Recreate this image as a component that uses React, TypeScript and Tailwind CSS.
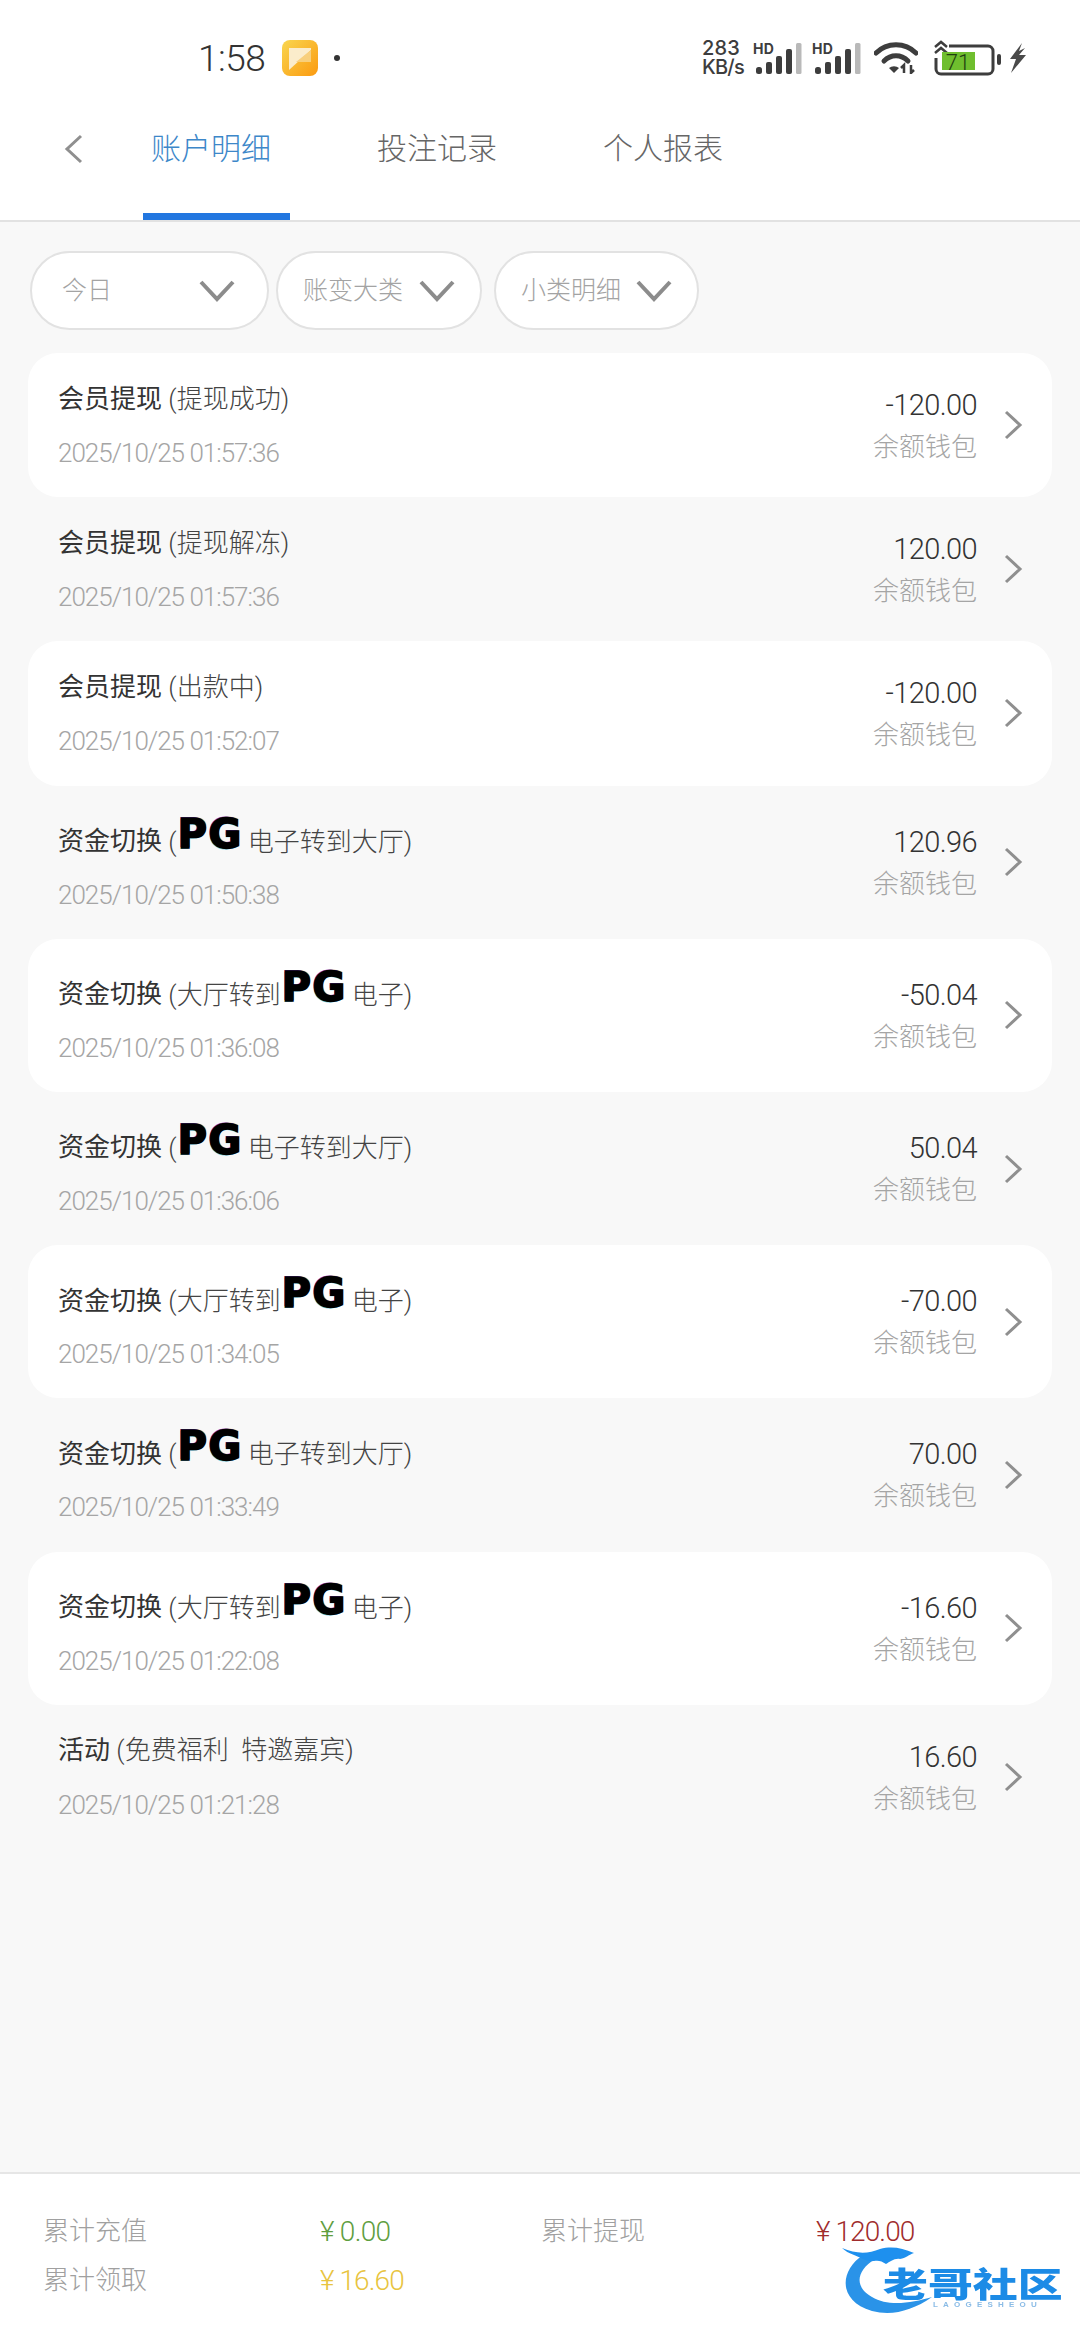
import React from "react";

const cjk = "font-['Roboto','Noto_Sans_CJK_SC',sans-serif]";

function Signal() {
  return (
    <div className="relative h-[31px] w-[49px]">
      <span className="absolute left-0 top-0 font-['Inter',sans-serif] text-[14px] font-bold leading-[11px] tracking-[0.4px] text-[#3d3d3d]">HD</span>
      <svg width="49" height="31" viewBox="0 0 49 31" className="absolute left-0 top-0">
        <rect x="3" y="24" width="6" height="7" rx="2.5" fill="#3d3d3d" />
        <rect x="13" y="19" width="6" height="12" rx="2" fill="#3d3d3d" />
        <rect x="23" y="13" width="6" height="18" rx="2" fill="#3d3d3d" />
        <rect x="33" y="6" width="6" height="25" rx="2" fill="#3d3d3d" />
        <rect x="43" y="0" width="5.5" height="31" rx="1.5" fill="#b9b9b9" />
      </svg>
    </div>
  );
}

function StatusBar() {
  return (
    <div className="flex h-[90px] items-center pr-[54px] pt-[26px]">
      <span className="ml-[198px] font-['Roboto',sans-serif] text-[37px] font-light leading-none tracking-[-0.5px] text-[#333]">1:58</span>
      <svg width="36" height="36" viewBox="0 0 36 36" className="ml-[17px]">
        <defs>
          <linearGradient id="o" x1="0" y1="0" x2="1" y2="1">
            <stop offset="0" stopColor="#f9d64f" />
            <stop offset="1" stopColor="#fb9a10" />
          </linearGradient>
        </defs>
        <rect width="36" height="36" rx="8" fill="url(#o)" />
        <path d="M7 8h22v2L7 30z" fill="#fbeccb" />
        <path d="M29 10v12H14z" fill="#f8cf7c" />
      </svg>
      <span className="ml-[16px] h-[6px] w-[6px] rounded-full bg-[#333]" />
      <div className="ml-auto flex w-[46px] flex-col font-['Inter',sans-serif] text-[20px] font-medium leading-[19px] text-[#3d3d3d]">
        <span className="tracking-[0.2px]">283</span>
        <span className="whitespace-nowrap tracking-[-0.8px]">KB/s</span>
      </div>
      <div className="ml-[5px]"><Signal /></div>
      <div className="ml-[10px]"><Signal /></div>
      <svg width="44" height="32" viewBox="0 0 44 32" className="ml-[13px]">
        <path d="M2 11C13 0 31 0 42 11" fill="none" stroke="#3d3d3d" strokeWidth="5" strokeLinecap="round" />
        <path d="M10 19C17 12 27 12 34 19" fill="none" stroke="#3d3d3d" strokeWidth="5" strokeLinecap="round" />
        <path d="M15 26a7 6 0 0 1 10 0l-5 5z" fill="#3d3d3d" />
        <path d="M30 31v-8l-3 3M37 23v8l3-3" fill="none" stroke="#3d3d3d" strokeWidth="2.5" />
      </svg>
      <svg width="68" height="36" viewBox="0 0 68 36" className="ml-[16px]">
        <path d="M1 7l6-5 6 5M1 13l6-5 6 5" fill="none" stroke="#3d3d3d" strokeWidth="2.5" />
        <path d="M2 18v11a5 5 0 0 0 5 5h47a5 5 0 0 0 5-5V11a5 5 0 0 0-5-5H15" fill="none" stroke="#3d3d3d" strokeWidth="3" />
        <path d="M8 12h33v18H8z" fill="#6fbe2e" />
        <rect x="63" y="14" width="4" height="11" rx="2" fill="#3d3d3d" />
        <text x="24" y="30" textAnchor="middle" fontFamily="Roboto" fontSize="22" fontWeight="300" fill="#1f3d10">71</text>
      </svg>
      <svg width="17" height="30" viewBox="0 0 17 30" className="ml-[7px]">
        <path d="M13 0L1 16h6l-5 14 15-18h-7l6-7-6 3z" fill="#4a4a4a" />
      </svg>
    </div>
  );
}

function Tabs() {
  return (
    <div className="flex h-[130px] items-stretch">
      <div className="ml-[64px] flex items-center pb-[13px]">
        <svg width="20" height="30" viewBox="0 0 20 30">
          <path d="M17 2L3 15l14 13" fill="none" stroke="#8f8f8f" strokeWidth="3" />
        </svg>
      </div>
      <div className={`ml-[59px] flex w-[147px] items-center border-b-[7px] border-[#2277e0] pb-[7px] pl-[8px] text-[30px] font-light text-[#3d87c9] ${cjk}`}>账户明细</div>
      <div className={`ml-[87px] flex w-[120px] items-center pb-[14px] text-[30px] font-light text-[#666] ${cjk}`}>投注记录</div>
      <div className={`ml-[106px] flex w-[120px] items-center pb-[14px] text-[30px] font-light text-[#666] ${cjk}`}>个人报表</div>
    </div>
  );
}

function Filter({ label, w, pl, iconMl }: { label: string; w: string; pl: string; iconMl: string }) {
  return (
    <div className={`flex h-[79px] items-center rounded-full border-[2.5px] border-[#e2e2e2] bg-white ${w} ${pl} text-[25px] font-light text-[#a3a3a3] ${cjk}`}>
      <span>{label}</span>
      <svg width="36" height="24" viewBox="0 0 36 24" className={iconMl}>
        <path d="M2 3l16 17L34 3" fill="none" stroke="#8c8c8c" strokeWidth="4" />
      </svg>
    </div>
  );
}

function PG() {
  return (
    <span className="ml-[1px] mr-[5px] inline-block -translate-y-[3px] font-['DejaVu_Sans',sans-serif] text-[40px] font-bold leading-[30px] tracking-[1.5px] text-black [-webkit-text-stroke:1.5px_#000] [text-shadow:-1px_-1px_0_#7a3ccf,1px_-1px_0_#f4c46a,-1px_1px_0_#58c8e8]">PG</span>
  );
}

type Row = { title: string; detail: React.ReactNode; time: string; amount: string };

const rows: Row[] = [
  { title: "会员提现", detail: "(提现成功)", time: "2025/10/25 01:57:36", amount: "-120.00" },
  { title: "会员提现", detail: "(提现解冻)", time: "2025/10/25 01:57:36", amount: "120.00" },
  { title: "会员提现", detail: "(出款中)", time: "2025/10/25 01:52:07", amount: "-120.00" },
  { title: "资金切换", detail: <>(<PG />电子转到大厅)</>, time: "2025/10/25 01:50:38", amount: "120.96" },
  { title: "资金切换", detail: <>(大厅转到<PG />电子)</>, time: "2025/10/25 01:36:08", amount: "-50.04" },
  { title: "资金切换", detail: <>(<PG />电子转到大厅)</>, time: "2025/10/25 01:36:06", amount: "50.04" },
  { title: "资金切换", detail: <>(大厅转到<PG />电子)</>, time: "2025/10/25 01:34:05", amount: "-70.00" },
  { title: "资金切换", detail: <>(<PG />电子转到大厅)</>, time: "2025/10/25 01:33:49", amount: "70.00" },
  { title: "资金切换", detail: <>(大厅转到<PG />电子)</>, time: "2025/10/25 01:22:08", amount: "-16.60" },
  { title: "活动", detail: "(免费福利  特邀嘉宾)", time: "2025/10/25 01:21:28", amount: "16.60" },
];

function RowItem({ row, index }: { row: Row; index: number }) {
  const tall = index >= 3 && index <= 8;
  return (
    <div className={`flex items-center rounded-[30px] pl-[30px] pr-[29px] ${tall ? "h-[153.2px]" : "h-[144.2px]"} ${index % 2 === 0 ? "bg-white" : ""}`}>
      <div className={`flex-1 self-start ${tall ? "pt-[38px]" : "pt-[28px]"} ${cjk}`}>
        <div className="flex h-[36px] items-center whitespace-pre text-[26px] text-[#333]">
          <span className="font-normal">{row.title}</span>
          <span className="font-light"> </span>
          <span className="font-light text-[#444]">{row.detail}</span>
        </div>
        <div className={`h-[36px] text-[26px] font-light leading-[36px] tracking-[-1px] text-[#a5a5a5] ${tall ? "mt-[17px]" : "mt-[18px]"}`}>{row.time}</div>
      </div>
      <div className={`self-start text-right ${tall ? "pt-[38px]" : "pt-[34px]"} ${cjk}`}>
        <div className="h-[36px] text-[29px] font-light leading-[36px] tracking-[-0.6px] text-[#333]">{row.amount}</div>
        <div className="mt-[6px] h-[36px] text-[26px] font-light leading-[36px] text-[#a5a5a5]">余额钱包</div>
      </div>
      <svg width="20" height="30" viewBox="0 0 20 30" className="ml-[26px]">
        <path d="M3 2l14 13L3 28" fill="none" stroke="#8f8f8f" strokeWidth="3" />
      </svg>
    </div>
  );
}

function Footer() {
  return (
    <div className={`relative h-[168px] border-t-2 border-[#e6e6e6] bg-white pl-[43px] pt-[33px] text-[26px] font-light ${cjk}`}>
      <div className="grid grid-cols-[277px_221px_275px_1fr] grid-rows-[49px_49px] items-center">
        <span className="text-[#a0a0a0]">累计充值</span>
        <span className="text-[28px] tracking-[-0.7px] text-[#5f9e3f]">¥ 0.00</span>
        <span className="text-[#a0a0a0]">累计提现</span>
        <span className="text-[28px] tracking-[-0.9px] text-[#a02c2c]">¥ 120.00</span>
        <span className="text-[#a0a0a0]">累计领取</span>
        <span className="text-[28px] tracking-[-0.9px] text-[#e8c440]">¥ 16.60</span>
      </div>
      <div className="absolute left-[842px] top-[73px] h-[68px] w-[222px] blur-[0.5px]">
        <svg width="100" height="68" viewBox="0 0 100 68" className="absolute left-0 top-0">
          <path d="M21 8C-3 24-4 54 30 64c20 5 40 0 60-14-20 6-44 10-60 0C12 40 14 24 33 12z" fill="#2a93e8" />
          <path d="M0 1c14 6 26 6 38 1 12-3 22-1 34 4-6 2-8 5-14 6-6-1-10 3-14 5-4-3-8-4-12-3-6 1-13-3-20-6C7 6 3 4 0 1z" fill="#1e90ee" />
        </svg>
        <span className="absolute left-[41px] top-[20px] origin-left scale-x-[1.32] whitespace-nowrap font-['Noto_Sans_CJK_SC',sans-serif] text-[34px] font-black leading-[32px] text-[#1c8be6]">老哥社区</span>
        <span className="absolute left-[91px] top-[54px] whitespace-nowrap font-['Liberation_Sans',sans-serif] text-[8px] font-bold leading-[8px] tracking-[5.2px] text-[#8bbce6]">LAOGESHEOU</span>
      </div>
    </div>
  );
}

export default function App() {
  return (
    <div className="flex h-[2340px] w-[1080px] flex-col overflow-hidden bg-[#f8f8f8]">
      <div className="border-b-2 border-[#e2e2e2] bg-white">
        <StatusBar />
        <Tabs />
      </div>
      <div className="flex-1 px-[28px]">
        <div className="mt-[29px] flex pl-[2px]">
          <Filter label="今日" w="w-[239px]" pl="pl-[30px]" iconMl="ml-[87px]" />
          <div className="ml-[7px]"><Filter label="账变大类" w="w-[206px]" pl="pl-[25px]" iconMl="ml-[16px]" /></div>
          <div className="ml-[12px]"><Filter label="小类明细" w="w-[205px]" pl="pl-[25px]" iconMl="ml-[15px]" /></div>
        </div>
        <div className="mt-[23px] flex flex-col">
          {rows.map((r, i) => (
            <RowItem key={i} row={r} index={i} />
          ))}
        </div>
      </div>
      <Footer />
    </div>
  );
}
